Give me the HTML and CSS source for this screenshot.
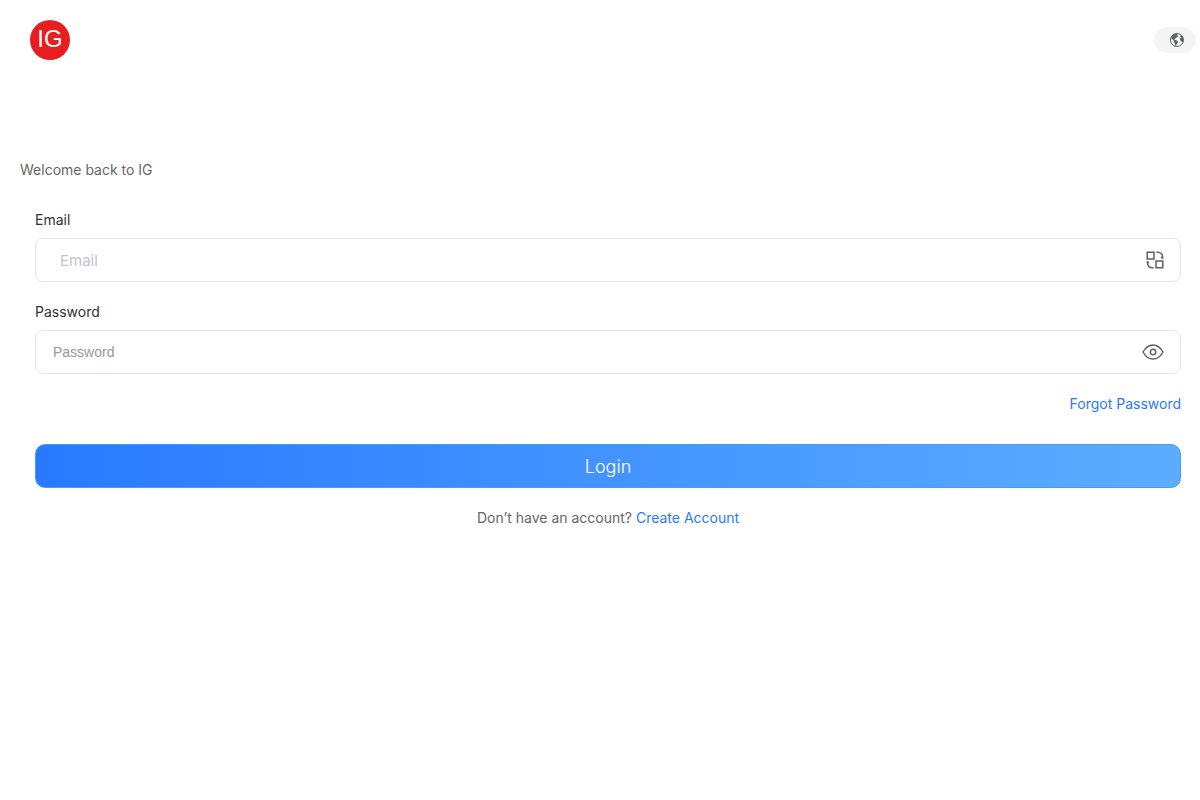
FILE: index.html
```html
<!DOCTYPE html>
<html lang="en">
<head>
  <meta charset="UTF-8">
  <meta name="viewport" content="width=device-width, initial-scale=1.0">
  <title>Login</title>
  <link rel="stylesheet" href="styles.css">
</head>
<body>
  <header class="header">
    <a class="logo" href="#">IG</a>
    <button class="lang" type="button" aria-label="Language">
      <svg width="14" height="14" viewBox="0 0 14 14">
        <circle cx="7" cy="7" r="6.5" fill="#f4f4f4" stroke="#606266" stroke-width="1"/>
        <path fill="#606266" d="M1 4.3 3 1.8 5.8.6 7.6.8 7.2 2.2 8.2 3 7 4.4 6 4.6 5.2 6 4.4 5.8 4.8 7 6.4 7.2 8 8.6 7.6 10 6.6 11 6.2 13.2 5.2 12.8 4.9 10.4 3.8 9 4 7.8 2.2 6.2Z"/>
        <path fill="#606266" d="M10.4 1.8 12.4 3.6 13.4 6.2 13.2 8.4 12 9.8 11.4 8 10.2 7.6 9.8 6.2 10.6 5 11.4 4.6 10.2 3.4Z"/>
      </svg>
    </button>
  </header>

  <main class="main">
    <p class="welcome">Welcome back to IG</p>
    <form class="form">
      <label class="label" for="email">Email</label>
      <div class="field">
        <input class="input input-email" id="email" type="email" placeholder="Email">
        <button class="icon" type="button" aria-label="Switch login method">
          <svg width="18" height="18" viewBox="0 0 18 18" fill="none" stroke="#606266" stroke-width="1.5">
            <path d="M1.2 1.2h6.8v6.8H1.2zM10 10h6.8v6.8H10zM10.4 1.2h1.4a4.8 4.8 0 0 1 4.8 4.8v1.8M15 6.2l1.6 1.2M1.4 10.2v1.8a4.8 4.8 0 0 0 4.8 4.8h1.4M3 11.8l-1.6-1.2"/>
          </svg>
        </button>
      </div>
      <label class="label" for="password">Password</label>
      <div class="field">
        <input class="input input-password" id="password" type="password" placeholder="Password">
        <button class="icon" type="button" aria-label="Show password">
          <svg width="22" height="16" viewBox="0 0 22 16" fill="none" stroke="#606266" stroke-width="1.5">
            <path d="M1 8Q5 .9 11 .9T21 8Q17 15.1 11 15.1T1 8Z"/>
            <circle cx="11" cy="8" r="2.7"/>
          </svg>
        </button>
      </div>
      <a class="link forgot" href="#">Forgot Password</a>
      <button class="login" type="submit">Login</button>
      <p class="signup">Don’t have an account? <a class="link" href="#">Create Account</a></p>
    </form>
  </main>
</body>
</html>
```
FILE: styles.css
```css
* {
    box-sizing: border-box;
}
body {
    margin: 0;
    background: #fff;
    color: #303133;
    font-family: Inter, "Liberation Sans", sans-serif;
    font-size: 14px;
    line-height: 20px;
}
button {
    border: 0;
    padding: 0;
    font-family: inherit;
    cursor: pointer;
}
svg {
    display: block;
}
.header {
    display: flex;
    align-items: center;
    justify-content: space-between;
    height: 80px;
    padding: 0 4px 0 30px;
}
.logo {
    width: 40px;
    height: 40px;
    border-radius: 50%;
    background: #e61e1e;
    color: #fff;
    font-family: "Liberation Sans", sans-serif;
    font-size: 24px;
    line-height: 38px;
    text-align: center;
    text-decoration: none;
}
.lang {
    display: flex;
    align-items: center;
    justify-content: flex-end;
    width: 42px;
    height: 26px;
    padding-right: 12px;
    border-radius: 13px;
    background: #f4f4f4;
}
.main {
    padding: 80px 19px 0 20px;
}
.welcome {
    margin: 0 0 30px;
    color: #666;
}
.form {
    display: flex;
    flex-direction: column;
    padding-left: 15px;
}
.label {
    margin-bottom: 8px;
}
.field {
    display: flex;
    align-items: center;
    height: 44px;
    margin-bottom: 20px;
    padding-right: 16px;
    border: 1px solid #e4e4e4;
    border-radius: 8px;
}
.input {
    flex: 1;
    min-width: 0;
    height: 100%;
    border: 0;
    outline: 0;
    background: none;
    color: #303133;
}
.input-email {
    padding: 0 24px;
    font-family: inherit;
    font-size: 15px;
}
.input-email::placeholder {
    color: #c0c4cc;
}
.input-password {
    padding: 0 17px;
    font-family: "Liberation Sans", sans-serif;
    font-size: 14px;
}
.input-password::placeholder {
    color: #999;
}
.icon {
    background: none;
}
.link {
    color: #2979ff;
    text-decoration: none;
}
.forgot {
    align-self: flex-end;
}
.login {
    height: 44px;
    margin: 30px 0 20px;
    border: 1px solid #409eff;
    border-radius: 10px;
    background: linear-gradient(90deg, #2979ff, #5cadff);
    color: #fff;
    font-size: 18px;
    font-weight: 300;
}
.signup {
    margin: 0;
    color: #666;
    text-align: center;
}
```
